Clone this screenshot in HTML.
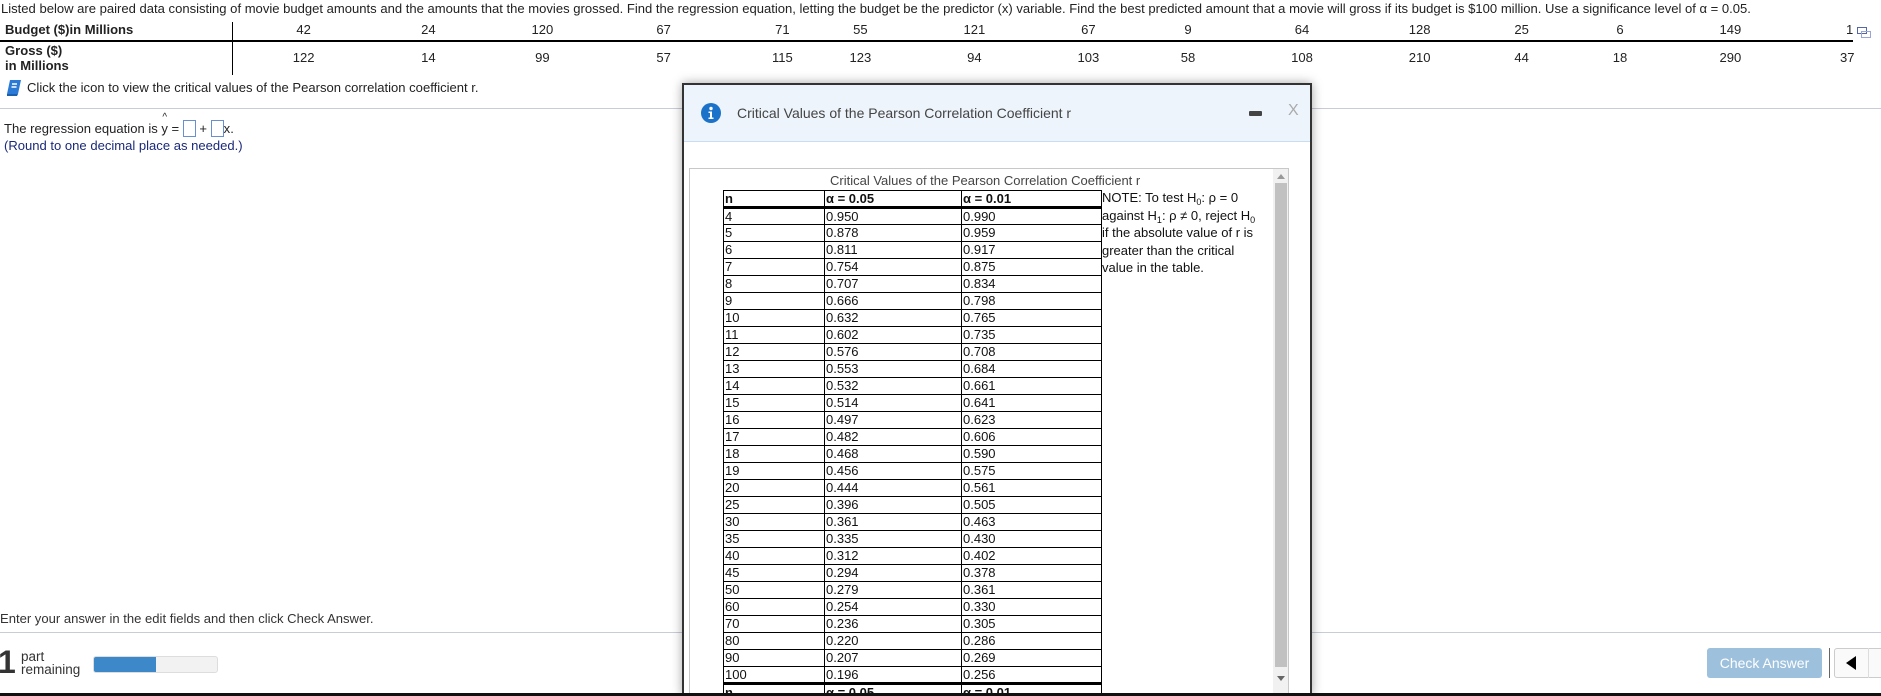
<!DOCTYPE html>
<html style="width:1881px;height:696px;overflow:hidden"><head><meta charset="utf-8">
<style>
*{margin:0;padding:0;box-sizing:border-box}
body{width:1881px;height:696px;overflow:hidden;background:#fff;font-family:"Liberation Sans",Arial,sans-serif;color:#222;position:relative;font-size:13.05px}
.a{position:absolute;white-space:nowrap}
.c{position:absolute;transform:translateX(-50%);white-space:nowrap}
.b{font-weight:bold}
.box{display:inline-block;width:13px;height:17px;border:1px solid #6a8fd0;vertical-align:-4px;background:#fff}
#modal{position:absolute;left:682px;top:83px;width:630px;height:613px;border:2px solid #333;border-bottom:none;background:#fff;box-shadow:0 0 10px rgba(0,0,0,.35);overflow:hidden}
#hdr{position:absolute;left:0;top:0;width:100%;height:57px;background:#eef4fc;border-bottom:1px solid #c9dcf2}
#inner{position:absolute;left:5px;top:83px;width:600px;height:540px;border:1px solid #c8c8c8;overflow:hidden}
table{position:absolute;left:33px;top:21px;border-collapse:collapse;font-size:13px;color:#111;table-layout:fixed;width:378px}
td{border:1px solid #000;height:17px;padding:0 0 0 1px;line-height:15px;vertical-align:top;overflow:hidden}
tr.h td{border-bottom:3px solid #000}
.sb{position:relative;font-size:9px;top:3px;line-height:0}
</style></head><body>
<div class="a" style="left:1px;top:1px">Listed below are paired data consisting of movie budget amounts and the amounts that the movies grossed. Find the regression equation, letting the budget be the predictor (x) variable. Find the best predicted amount that a movie will gross if its budget is $100 million. Use a significance level of α = 0.05.</div>
<div class="a b" style="left:5px;top:22px">Budget ($)in Millions</div>
<div class="a b" style="left:5px;top:43px;line-height:15px">Gross ($)<br>in Millions</div>
<div style="position:absolute;left:232px;top:22px;width:1px;height:53px;background:#000"></div>
<div style="position:absolute;left:0;top:40px;width:1853px;height:2px;background:#000"></div>
<script>
var xs=[253,357,452,553,652,717,812,907,990,1085,1183,1268,1350,1442];
var r1=[42,24,120,67,71,55,121,67,9,64,128,25,6,149];
var r2=[122,14,99,57,115,123,94,103,58,108,210,44,18,290];
var h='';
for(var i=0;i<xs.length;i++){h+='<div class="c" style="left:'+(xs[i]*1.2)+'px;top:22px">'+r1[i]+'</div>';h+='<div class="c" style="left:'+(xs[i]*1.2)+'px;top:50px">'+r2[i]+'</div>';}
h+='<div class="a" style="left:1846px;top:22px">1</div><div class="a" style="left:1840px;top:50px">37</div>';
document.write(h);
</script>
<div style="position:absolute;left:1857px;top:27px;width:10px;height:7px;border:1.5px solid #5566aa"></div>
<div style="position:absolute;left:1861px;top:31px;width:10px;height:7px;border:1.5px solid #99a6d6"></div>
<svg class="a" style="left:6px;top:79px" width="16" height="18" viewBox="0 0 16 18"><path d="M4 1h11l-3 14H1z" fill="#2b7bd6"/><path d="M1 15h11l-1 2H1z" fill="#1a5fb0"/><path d="M6 5h5M5.5 8h5" stroke="#fff" stroke-width="1.4"/></svg>
<div class="a" style="left:27px;top:80px">Click the icon to view the critical values of the Pearson correlation coefficient r.</div>
<div style="position:absolute;left:0;top:108px;width:1881px;height:1px;background:#c8ccd8"></div>
<div class="a" style="left:4px;top:120px">The regression equation is <span style="position:relative">y<span style="position:absolute;left:1px;top:-9px;font-size:10px">^</span></span> = <span class="box"></span> + <span class="box"></span>x.</div>
<div class="a" style="left:4px;top:138px;color:#1a2a7a">(Round to one decimal place as needed.)</div>
<div class="a" style="left:0;top:611px;color:#333">Enter your answer in the edit fields and then click Check Answer.</div>
<div style="position:absolute;left:0;top:632px;width:1881px;height:1px;background:#c8ccd8"></div>
<div class="a" style="left:-2px;top:647px;font-size:32px;font-weight:bold;color:#333;line-height:30px">1</div>
<div class="a" style="left:21px;top:650px;line-height:13px;color:#333;font-size:13.5px">part<br>remaining</div>
<div style="position:absolute;left:93px;top:656px;width:125px;height:17px;border:1px solid #ddd;border-radius:3px;background:#f2f2f2;overflow:hidden"><div style="width:62px;height:100%;background:#3d88c8"></div></div>
<div class="a" style="left:1707px;top:648px;width:115px;height:30px;background:#9dc1dd;border-radius:3px;color:#fff;text-align:center;line-height:30px;font-size:14px">Check Answer</div>
<div style="position:absolute;left:1829px;top:648px;width:1px;height:30px;background:#666"></div>
<div style="position:absolute;left:1834px;top:648px;width:50px;height:30px;border:1px solid #ccc;border-radius:3px;background:#fafafa"></div>
<div style="position:absolute;left:1868px;top:648px;width:1px;height:30px;background:#ddd"></div>
<svg class="a" style="left:1846px;top:656px" width="12" height="14"><path d="M10 0v14L0 7z" fill="#000"/></svg>

<div id="modal">
<div id="hdr">
<svg class="a" style="left:17px;top:18px" width="20" height="20"><circle cx="10" cy="10" r="10" fill="#1a72c9"/><circle cx="10" cy="5.5" r="1.7" fill="#fff"/><path d="M7.5 8.5h3.5v6h1.5v1.5h-5v-1.5h1.5v-4.5h-1.5z" fill="#fff"/></svg>
<div class="a" style="left:53px;top:20px;font-size:14px;color:#444">Critical Values of the Pearson Correlation Coefficient r</div>
<div style="position:absolute;left:565px;top:26px;width:13px;height:5px;background:#444;border-radius:1px"></div>
<div class="a" style="left:604px;top:17px;font-size:16px;color:#aaa">X</div>
</div>
<div id="inner">
<div class="a" style="left:140px;top:4px;font-size:13px;color:#444">Critical Values of the Pearson Correlation Coefficient r</div>
<table>
<tr class="h"><td style="width:101px"><b>n</b></td><td style="width:137px"><b>α = 0.05</b></td><td style="width:140px"><b>α = 0.01</b></td></tr>
<script>
var d=[[4,.950,.990],[5,.878,.959],[6,.811,.917],[7,.754,.875],[8,.707,.834],[9,.666,.798],[10,.632,.765],[11,.602,.735],[12,.576,.708],[13,.553,.684],[14,.532,.661],[15,.514,.641],[16,.497,.623],[17,.482,.606],[18,.468,.590],[19,.456,.575],[20,.444,.561],[25,.396,.505],[30,.361,.463],[35,.335,.430],[40,.312,.402],[45,.294,.378],[50,.279,.361],[60,.254,.330],[70,.236,.305],[80,.220,.286],[90,.207,.269],[100,.196,.256]];
var s='';d.forEach(function(r){s+='<tr><td>'+r[0]+'</td><td>'+r[1].toFixed(3)+'</td><td>'+r[2].toFixed(3)+'</td></tr>';});
document.write(s);
</script>
<tr style="border-top:3px solid #000"><td><b>n</b></td><td><b>α = 0.05</b></td><td><b>α = 0.01</b></td></tr>
</table>
<div class="a" style="left:412px;top:20px;font-size:13px;line-height:17.5px;color:#111">NOTE: To test H<span class="sb">0</span>: ρ = 0<br>against H<span class="sb">1</span>: ρ ≠ 0, reject H<span class="sb">0</span><br>if the absolute value of r is<br>greater than the critical<br>value in the table.</div>
<div style="position:absolute;left:583px;top:0;width:16px;height:540px;background:#f1f1f1"></div>
<div style="position:absolute;left:585px;top:14px;width:12px;height:484px;background:#c1c1c1"></div>
<svg class="a" style="left:587px;top:5px" width="8" height="5"><path d="M0 5L4 0 8 5z" fill="#999"/></svg>
<svg class="a" style="left:587px;top:507px" width="8" height="5"><path d="M0 0L4 5 8 0z" fill="#666"/></svg>
</div>
</div>
<div style="position:absolute;left:0;top:693px;width:1881px;height:3px;background:#111;z-index:5"></div>
</body></html>
